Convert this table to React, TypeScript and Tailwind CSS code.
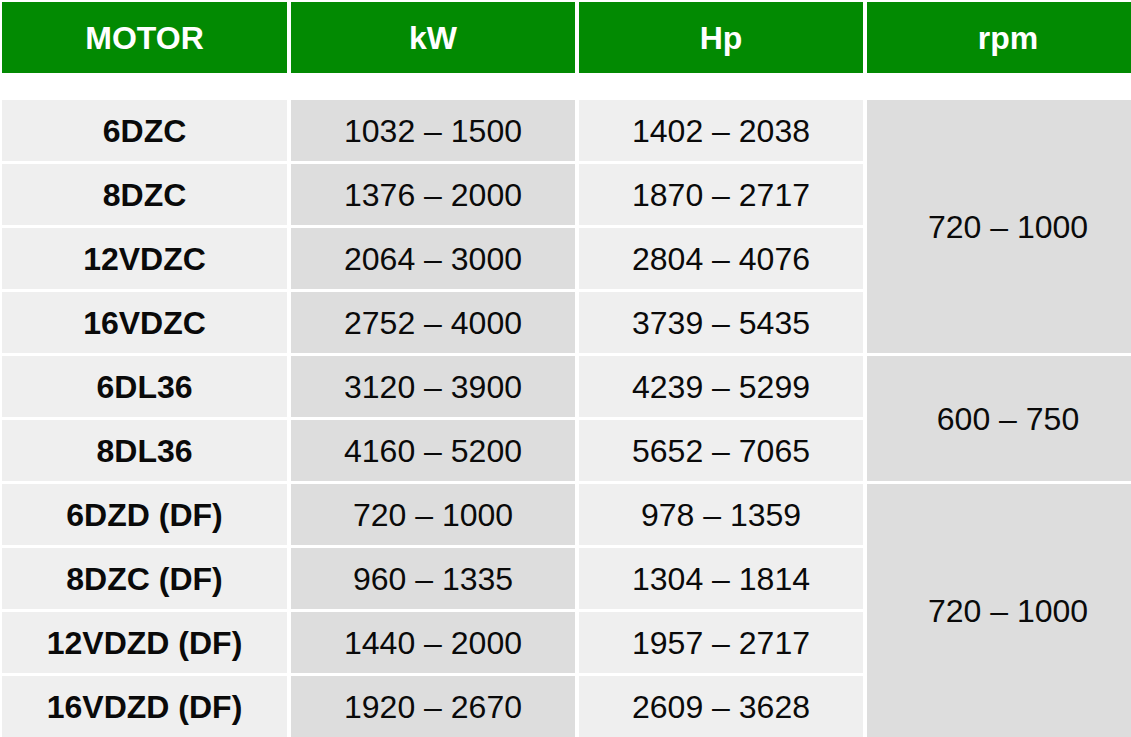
import React from 'react';

const rows = [
  { motor: '6DZC', kw: '1032 – 1500', hp: '1402 – 2038' },
  { motor: '8DZC', kw: '1376 – 2000', hp: '1870 – 2717' },
  { motor: '12VDZC', kw: '2064 – 3000', hp: '2804 – 4076' },
  { motor: '16VDZC', kw: '2752 – 4000', hp: '3739 – 5435' },
  { motor: '6DL36', kw: '3120 – 3900', hp: '4239 – 5299' },
  { motor: '8DL36', kw: '4160 – 5200', hp: '5652 – 7065' },
  { motor: '6DZD (DF)', kw: '720 – 1000', hp: '978 – 1359' },
  { motor: '8DZC (DF)', kw: '960 – 1335', hp: '1304 – 1814' },
  { motor: '12VDZD (DF)', kw: '1440 – 2000', hp: '1957 – 2717' },
  { motor: '16VDZD (DF)', kw: '1920 – 2670', hp: '2609 – 3628' },
];

// rpm cells cover several motor rows each
const rpmGroups = [
  { value: '720 – 1000', span: 'row-span-4' },
  { value: '600 – 750', span: 'row-span-2' },
  { value: '720 – 1000', span: 'row-span-4' },
];

const cell = 'flex items-center justify-center whitespace-nowrap';
const cols = 'grid grid-cols-[285px_284px_284px_282px] gap-x-[4px]';

export default function App() {
  return (
    <div
      className="w-[1131px] h-[737px] overflow-hidden bg-white pl-[2px] pt-[2px] text-[#0a0a0a]"
      style={{ fontFamily: '"Liberation Sans", Arial, sans-serif' }}
    >
      {/* Header */}
      <div className={`${cols} h-[71px] w-[1147px]`}>
        {['MOTOR', 'kW', 'Hp', 'rpm'].map((h) => (
          <div key={h} className={`${cell} bg-[#028a02] text-white font-bold text-[32px]`}>
            {h}
          </div>
        ))}
      </div>

      {/* Body */}
      <div className={`${cols} w-[1147px] mt-[27px] grid-rows-[repeat(10,61px)] gap-y-[3px]`}>
        {rows.map((r, i) => (
          <div
            key={'m' + i}
            className={`${cell} col-start-1 bg-[#efefef] font-bold text-[32px]`}
            style={{ gridRowStart: i + 1 }}
          >
            {r.motor}
          </div>
        ))}
        {rows.map((r, i) => (
          <div
            key={'k' + i}
            className={`${cell} col-start-2 bg-[#dddddd] text-[32px]`}
            style={{ gridRowStart: i + 1 }}
          >
            {r.kw}
          </div>
        ))}
        {rows.map((r, i) => (
          <div
            key={'h' + i}
            className={`${cell} col-start-3 bg-[#efefef] text-[32px]`}
            style={{ gridRowStart: i + 1 }}
          >
            {r.hp}
          </div>
        ))}
        {rpmGroups.map((g, i) => (
          <div key={'r' + i} className={`${cell} col-start-4 ${g.span} bg-[#dddddd] text-[32px]`}>
            {g.value}
          </div>
        ))}
      </div>
    </div>
  );
}
